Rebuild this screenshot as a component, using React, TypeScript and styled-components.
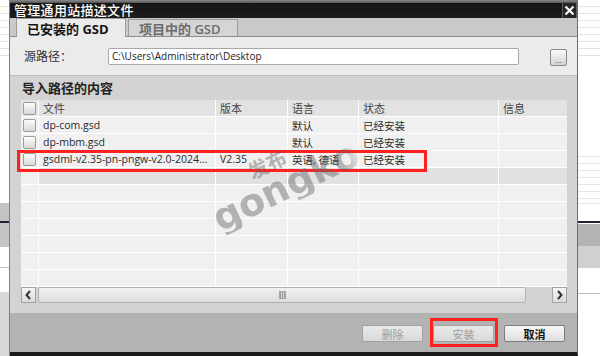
import React from "react";
import styled, { createGlobalStyle } from "styled-components";

const UI_FONT = `"Open Sans", "Noto Sans CJK SC", sans-serif`;

const GlobalStyle = createGlobalStyle`
  html, body { margin: 0; padding: 0; background: #fff; }
  body { font-family: ${UI_FONT}; }
  * { box-sizing: border-box; }
`;

interface FileRow {
  file: string;
  version: string;
  language: string;
  status: string;
}

const files: Array<FileRow> = [
  { file: "dp-com.gsd", version: "", language: "默认", status: "已经安装" },
  { file: "dp-mbm.gsd", version: "", language: "默认", status: "已经安装" },
  { file: "gsdml-v2.35-pn-pngw-v2.0-2024...", version: "V2.35", language: "英语, 德语", status: "已经安装" },
];

const EMPTY_ROWS = 7;

const Page = styled.div`
  display: flex;
  width: 600px;
  height: 356px;
  overflow: hidden;
  background: #fff;
`;

// bits of the window behind the dialog
const LeftEdge = styled.div`
  width: 10px;
  flex: none;
  border-right: 1px solid #808080;
  background:
    linear-gradient(to bottom, transparent 221px, #1e2233 221px, #1e2233 223px, transparent 223px),
    linear-gradient(to bottom, transparent 203px, #c4c4c4 203px, #c4c4c4 247px, transparent 247px,
      transparent 267px, #bdbdbd 267px, #bdbdbd 268px, transparent 268px, transparent 292px, #d8d8d8 292px),
    repeating-linear-gradient(to bottom, #fff 0 6px, #e3e3e3 6px 7px) 0 0 / 100% 60px no-repeat,
    #fff;
`;

const RightEdge = styled.div`
  flex: 1;
  background:
    linear-gradient(to bottom, transparent 221px, #1e2233 221px, #1e2233 223px, transparent 223px),
    linear-gradient(to bottom, transparent 224px, #b3b3b3 224px, #b3b3b3 246px, #d0d0d0 246px, #d0d0d0 268px,
      transparent 268px, transparent 293px, #bcbcbc 293px, #bcbcbc 294px, transparent 294px),
    linear-gradient(to bottom, transparent 203px, #e6e6e6 203px, #e6e6e6 204px, transparent 204px),
    repeating-linear-gradient(to bottom, #fff 0 6px, #e3e3e3 6px 7px) 0 0 / 100% 60px no-repeat,
    repeating-linear-gradient(to bottom, #fff 0 6px, #e6e6e6 6px 7px) 0 150px / 100% 52px no-repeat,
    #fff;
`;

const Dialog = styled.div`
  width: 568px;
  flex: none;
  display: flex;
  flex-direction: column;
  background: #c8c8c8;
  border-right: 1px solid #6e6e6e;
  border-bottom: 4px solid #1b1b1b;
`;

const TitleBar = styled.div`
  height: 18px;
  flex: none;
  display: flex;
  align-items: flex-end;
  padding-left: 4px;
  background: linear-gradient(to bottom, #8a8a8a 0, #555 3px, #161616 3px, #1c1c1c 100%);
`;

const Title = styled.div`
  flex: 1;
  color: #fff;
  font-size: 13px;
  line-height: 15px;
  font-weight: 500;
  letter-spacing: 0.3px;
`;

const CloseButton = styled.div`
  width: 15px;
  height: 16px;
  display: flex;
  align-items: center;
  justify-content: center;
  background: #262626;
  border: 1px solid #5c5c5c;
  border-bottom: none;
`;

const TabStrip = styled.div`
  height: 19px;
  flex: none;
  display: flex;
  align-items: flex-end;
  gap: 2px;
  padding-left: 6px;
  background: #c9c9c9;
  box-shadow: inset 0 -1px 0 #8e8e8e;
`;

const Tab = styled.div<{ active?: boolean }>`
  width: 110px;
  height: ${({ active }) => (active ? "19px" : "18px")};
  display: flex;
  align-items: center;
  padding-left: 10px;
  font-size: 13px;
  font-weight: ${({ active }) => (active ? 700 : 600)};
  color: ${({ active }) => (active ? "#151515" : "#6c6c6c")};
  background: ${({ active }) => (active ? "#ebebeb" : "#d5d5d5")};
  border: 1px solid #9b9b9b;
  border-bottom: ${({ active }) => (active ? "none" : "1px solid #8e8e8e")};
`;

const PathRow = styled.div`
  height: 38px;
  flex: none;
  display: flex;
  align-items: center;
  padding: 0 10px 0 14px;
  background: #ebebeb;
`;

const PathLabel = styled.div`
  width: 84px;
  font-size: 12px;
  color: #333;
`;

const PathInput = styled.div`
  width: 411px;
  height: 17px;
  display: flex;
  align-items: center;
  padding: 0 3px;
  background: #fff;
  border: 1px solid #a8a8a8;
  border-radius: 2px;
  font-size: 10px;
  color: #222;
`;

const BrowseButton = styled.div`
  margin-left: auto;
  width: 17px;
  height: 17px;
  margin-top: 2px;
  display: flex;
  align-items: flex-end;
  justify-content: center;
  border: 1px solid #8a8a8a;
  border-radius: 2px;
  background: linear-gradient(to bottom, #fafafa, #d2d2d2);
  font-size: 8px;
  line-height: 10px;
  color: #444;
`;

const Section = styled.div`
  height: 238px;
  flex: none;
  display: flex;
  flex-direction: column;
  padding: 0 10px 0 11px;
  background: #d3d3d3;
  border-top: 1px solid #c0c0c0;
`;

const SectionTitle = styled.div`
  height: 24px;
  line-height: 24px;
  padding-left: 1px;
  font-size: 13px;
  font-weight: 700;
  color: #222;
`;

const TableWrap = styled.div`
  position: relative;
  width: 546px;
`;

const Grid = styled.div`
  display: grid;
  grid-template-columns: 17px 176px 71px 70px 139px 68px;
  grid-template-rows: repeat(11, 16px);
  gap: 1px;
  padding-bottom: 1px;
  background: #fff;
`;

const Cell = styled.div<{ head?: boolean; shade?: boolean }>`
  display: flex;
  align-items: center;
  padding-left: 4px;
  overflow: hidden;
  white-space: nowrap;
  font-size: ${({ head }) => (head ? "11px" : "10.5px")};
  color: ${({ head }) => (head ? "#444" : "#2b2b2b")};
  background: ${({ head, shade }) => (head ? "#e2e2e2" : shade ? "#e1e1e1" : "#f0f0f0")};
`;

const BoxCell = styled(Cell)`
  padding-left: 2px;
`;

const Checkbox = styled.div`
  width: 13px;
  height: 13px;
  border: 1px solid #9c9c9c;
  border-radius: 2px;
  background: linear-gradient(to bottom, #fdfdfd, #d8d8d8);
`;

const RowMark = styled.div`
  position: absolute;
  left: -4px;
  top: 50px;
  width: 410px;
  height: 22px;
  border: 3px solid #ff2020;
  pointer-events: none;
`;

const Watermark = styled.div<{ size: number }>`
  position: absolute;
  font-family: "DejaVu Sans", sans-serif;
  font-weight: 700;
  font-size: ${({ size }) => size}px;
  line-height: 1;
  white-space: nowrap;
  color: rgba(100, 100, 100, 0.45);
  transform: rotate(-26deg);
  pointer-events: none;
`;

const MarkCn = styled(Watermark)`
  font-family: "Noto Sans CJK SC", sans-serif;
  left: 226px;
  top: 54px;
`;

const MarkEn = styled(Watermark)`
  left: 183px;
  top: 55px;
  -webkit-mask-image: linear-gradient(to right, #000 66%, transparent 76%);
  mask-image: linear-gradient(to right, #000 66%, transparent 76%);
`;

const HScroll = styled.div`
  height: 16px;
  display: flex;
  background: #d4d4d4;
`;

const ScrollButton = styled.div`
  width: 15px;
  height: 16px;
  flex: none;
  display: flex;
  align-items: center;
  justify-content: center;
  border: 1px solid #a3a3a3;
  background: linear-gradient(to bottom, #f6f6f6, #dadada);
`;

const Thumb = styled.div`
  width: 488px;
  margin: 0 26px 0 2px;
  display: flex;
  align-items: center;
  justify-content: center;
  border: 1px solid #b2b2b2;
  border-radius: 2px;
  background: linear-gradient(to bottom, #f1f1f1, #dcdcdc);
`;

const Grip = styled.div`
  width: 7px;
  height: 8px;
  background: repeating-linear-gradient(to right, #9a9a9a 0 1px, #d8d8d8 1px 2px);
  border: 1px solid #a8a8a8;
`;

const Footer = styled.div`
  height: 39px;
  flex: none;
  display: flex;
  justify-content: flex-end;
  align-items: flex-start;
  gap: 10px;
  padding: 12px 12px 0 0;
  background: #b3b3b3;
`;

const Button = styled.div<{ disabled?: boolean; marked?: boolean }>`
  position: relative;
  width: 61px;
  height: 17px;
  display: flex;
  align-items: center;
  justify-content: center;
  font-size: 11px;
  font-weight: ${({ disabled }) => (disabled ? 400 : 700)};
  color: ${({ disabled }) => (disabled ? "#9c9c9c" : "#111")};
  border: 1px solid ${({ disabled }) => (disabled ? "#a2a2a2" : "#7c7c7c")};
  border-radius: 2px;
  background: ${({ disabled }) =>
    disabled ? "linear-gradient(to bottom, #e9e9e9, #d9d9d9)" : "linear-gradient(to bottom, #f7f7f7, #dedede)"};

  &::after {
    content: "";
    display: ${({ marked }) => (marked ? "block" : "none")};
    position: absolute;
    inset: -8px -5px -6px -4px;
    border: 3px solid #ff2020;
  }
`;

const Chevron = ({ dir }: { dir: "left" | "right" }) => (
  <svg width="7" height="10" viewBox="0 0 7 10">
    <polyline
      points={dir === "left" ? "5,1 1.5,5 5,9" : "2,1 5.5,5 2,9"}
      fill="none"
      stroke="#333"
      strokeWidth="2"
    />
  </svg>
);

const App = () => {
  return (
    <>
      <GlobalStyle />
      <Page>
        <LeftEdge />
        <Dialog>
          <TitleBar>
            <Title>管理通用站描述文件</Title>
            <CloseButton>
              <svg width="11" height="11" viewBox="0 0 11 11">
                <path d="M1.5 1.5 L9.5 9.5 M9.5 1.5 L1.5 9.5" stroke="#fff" strokeWidth="2.2" />
              </svg>
            </CloseButton>
          </TitleBar>

          <TabStrip>
            <Tab active>已安装的 GSD</Tab>
            <Tab>项目中的 GSD</Tab>
          </TabStrip>

          <PathRow>
            <PathLabel>源路径：</PathLabel>
            <PathInput>{"C:\\Users\\Administrator\\Desktop"}</PathInput>
            <BrowseButton>...</BrowseButton>
          </PathRow>

          <Section>
            <SectionTitle>导入路径的内容</SectionTitle>
            <TableWrap>
              <Grid>
                <BoxCell head><Checkbox /></BoxCell>
                <Cell head>文件</Cell>
                <Cell head>版本</Cell>
                <Cell head>语言</Cell>
                <Cell head>状态</Cell>
                <Cell head>信息</Cell>

                {files.map((row) => (
                  <React.Fragment key={row.file}>
                    <BoxCell><Checkbox /></BoxCell>
                    <Cell>{row.file}</Cell>
                    <Cell>{row.version}</Cell>
                    <Cell>{row.language}</Cell>
                    <Cell>{row.status}</Cell>
                    <Cell />
                  </React.Fragment>
                ))}

                {Array.from({ length: EMPTY_ROWS }).map((_, i) => (
                  <React.Fragment key={i}>
                    <BoxCell />
                    <Cell shade={i === 0} />
                    <Cell shade={i === 0} />
                    <Cell shade={i === 0} />
                    <Cell shade={i === 0} />
                    <Cell shade={i === 0} />
                  </React.Fragment>
                ))}
              </Grid>

              <RowMark />
              <MarkCn size={20}>发布</MarkCn>
              <MarkEn size={38}>gongkong</MarkEn>

              <HScroll>
                <ScrollButton><Chevron dir="left" /></ScrollButton>
                <Thumb><Grip /></Thumb>
                <ScrollButton><Chevron dir="right" /></ScrollButton>
              </HScroll>
            </TableWrap>
          </Section>

          <Footer>
            <Button disabled>删除</Button>
            <Button disabled marked>安装</Button>
            <Button>取消</Button>
          </Footer>
        </Dialog>
        <RightEdge />
      </Page>
    </>
  );
};

export default App;
